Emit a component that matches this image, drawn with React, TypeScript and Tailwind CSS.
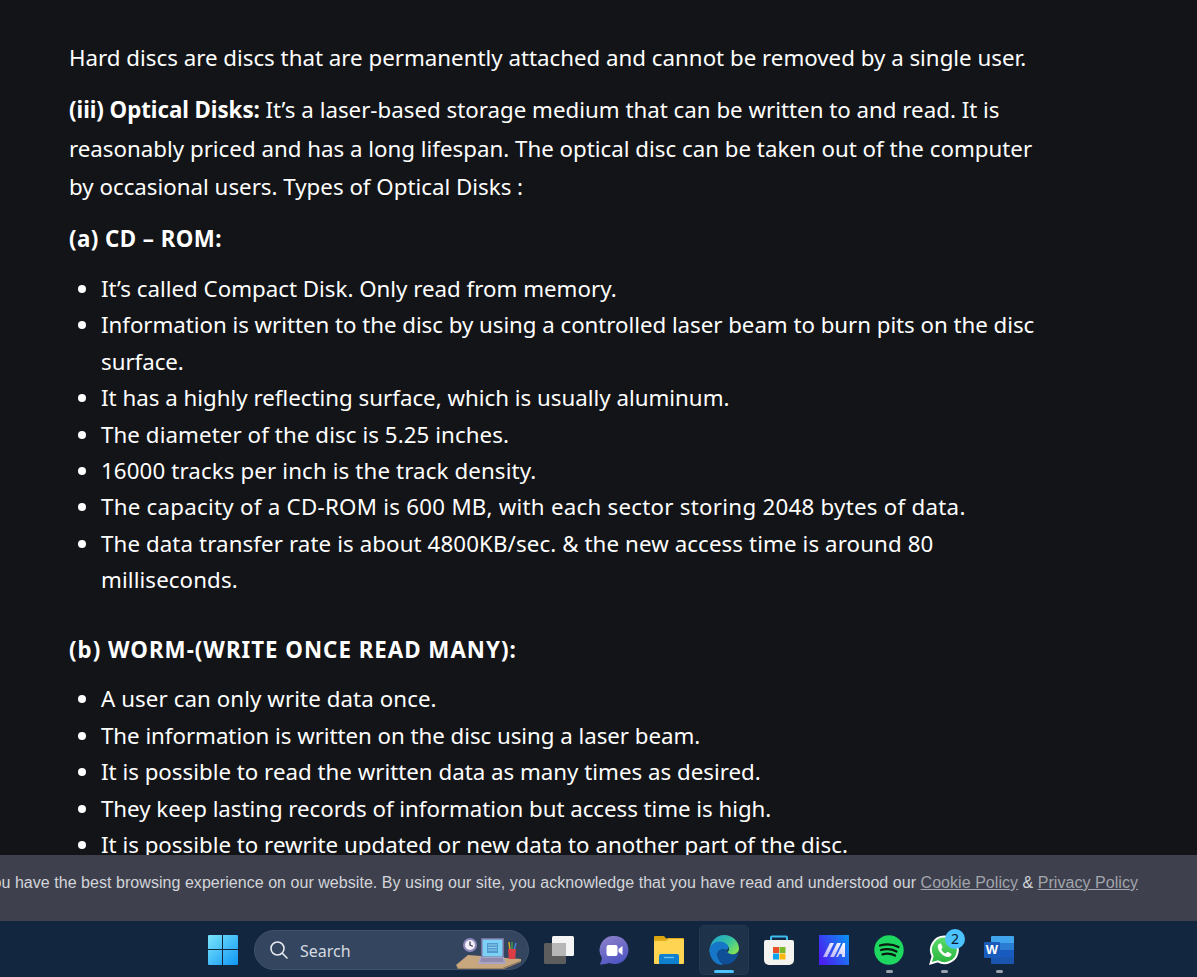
import type { ReactNode } from "react";

type Line = { text: string; cls?: string };

const cdRom: Line[] = [
  { text: "It’s called Compact Disk. Only read from memory." },
  { text: "Information is written to the disc by using a controlled laser beam to burn pits on the disc surface.", cls: "tracking-[-0.04px]" },
  { text: "It has a highly reflecting surface, which is usually aluminum." },
  { text: "The diameter of the disc is 5.25 inches.", cls: "tracking-[0.08px]" },
  { text: "16000 tracks per inch is the track density.", cls: "tracking-[0.12px]" },
  { text: "The capacity of a CD-ROM is 600 MB, with each sector storing 2048 bytes of data.", cls: "tracking-[0.26px]" },
  { text: "The data transfer rate is about 4800KB/sec. & the new access time is around 80 milliseconds.", cls: "tracking-[0.1px]" },
];

const worm: Line[] = [
  { text: "A user can only write data once.", cls: "tracking-[0.08px]" },
  { text: "The information is written on the disc using a laser beam.", cls: "tracking-[-0.04px]" },
  { text: "It is possible to read the written data as many times as desired." },
  { text: "They keep lasting records of information but access time is high.", cls: "tracking-[-0.04px]" },
  { text: "It is possible to rewrite updated or new data to another part of the disc." },
  { text: "Data that has already been written cannot be changed." },
];

const TextList = ({ items }: { items: Line[] }) => (
  <ul className="mt-[12.400px] list-disc pl-8 leading-[36.4px]">
    {items.map((item) => (
      <li key={item.text} className={item.cls}>{item.text}</li>
    ))}
  </ul>
);

const WindowsLogo = () => (
  <svg width="30" height="30" viewBox="0 0 30 30">
    <defs>
      <linearGradient id="win" x1="0" y1="0" x2="1" y2="1">
        <stop offset="0" stopColor="#7ae5fb" />
        <stop offset="1" stopColor="#0f96f5" />
      </linearGradient>
    </defs>
    <path fill="url(#win)" d="M0 1a1 1 0 0 1 1-1h13v14H0zM15 0h14a1 1 0 0 1 1 1v13H15zM0 15h14v15H1a1 1 0 0 1-1-1zM15 15h15v14a1 1 0 0 1-1 1H15z" />
  </svg>
);

// little desk picture at the right end of the search box
const DeskScene = () => (
  <svg width="72" height="40" viewBox="0 0 72 40" className="shrink-0">
    <path d="M0 35 12 25l53 4v2L47 38H2z" fill="#c8a77f" />
    <path d="M2 38h45l18-7v1L47 39.500H2L0 36z" fill="#9c8262" />
    <circle cx="14" cy="15" r="7" fill="#8d86b8" />
    <circle cx="14" cy="15" r="5" fill="#f1eff8" />
    <path d="M14 11.500v3.700l2.800 1" stroke="#2c2745" strokeWidth="1.200" fill="none" />
    <rect x="25" y="8" width="23" height="20" fill="#77719c" />
    <rect x="26.500" y="9.500" width="20" height="17" fill="#7fd0f5" />
    <rect x="31" y="13" width="11" height="10" fill="#4f9bd0" />
    <path d="M32 15h9M32 17.500h9M32 20h9" stroke="#a5d9f2" strokeWidth="0.800" />
    <path d="M24 27h24l2 7H22z" fill="#a9a3c4" />
    <path d="M25 29h22M24.500 31h23" stroke="#6d678f" strokeWidth="0.800" />
    <path d="M54 20l-1-8" stroke="#d9a928" strokeWidth="1.500" />
    <path d="M56 20v-8" stroke="#3f9a46" strokeWidth="1.500" />
    <path d="M58 20l2-7" stroke="#3f86d9" strokeWidth="1.500" />
    <path d="M52 19h8l-.8 10h-6.400z" fill="#dc3d45" />
  </svg>
);

const TaskView = () => (
  <svg width="30" height="28" viewBox="0 0 30 28">
    <rect x="0" y="7" width="22" height="21" rx="1.500" fill="#5d5d5d" />
    <rect x="8" y="0" width="22" height="20" rx="1.500" fill="#f4f4f4" />
    <rect x="8" y="7" width="14" height="13" fill="#b7b7b7" />
  </svg>
);

const ChatIcon = () => (
  <svg width="30" height="29" viewBox="0 0 30 29">
    <defs>
      <linearGradient id="chat" x1="0.2" y1="0" x2="0.6" y2="1">
        <stop offset="0" stopColor="#8b7fc9" />
        <stop offset="1" stopColor="#4f55c4" />
      </linearGradient>
    </defs>
    <path fill="url(#chat)" d="M15.500 0a14 14 0 1 1-5 27.100C8 28 4 28.700.5 28.500 2 26.500 2.800 24.500 2.800 21.500A14 14 0 0 1 15.500 0z" />
    <rect x="7.500" y="9" width="11" height="11" rx="2" fill="#fff" />
    <path d="M19.500 13l4-3v9l-4-3z" fill="#fff" />
  </svg>
);

const FolderIcon = () => (
  <svg width="30" height="28" viewBox="0 0 30 28">
    <path d="M1 0h9l3 3.500h-13V1a1 1 0 0 1 1-1z" fill="#dba50f" />
    <path d="M0 3h11l3-1 1 0h14a1 1 0 0 1 1 1v4H0z" fill="#e2ac1c" />
    <path d="M0 5h12l3-2h14a1 1 0 0 1 1 1v23a1 1 0 0 1-1 1H1a1 1 0 0 1-1-1z" fill="#ffd452" />
    <path d="M5 20a2 2 0 0 1 2-2h16a2 2 0 0 1 2 2v8H5z" fill="#0f7fd0" />
    <path d="M10 21.500h10" stroke="#6cc1f2" strokeWidth="1.300" />
  </svg>
);

const EdgeIcon = () => (
  <svg width="30" height="30" viewBox="0 0 30 30">
    <defs>
      <linearGradient id="edge1" x1="0" y1="0" x2="1" y2="0.700">
        <stop offset="0" stopColor="#1a9fd6" />
        <stop offset="0.600" stopColor="#36c3a0" />
        <stop offset="1" stopColor="#7fe05a" />
      </linearGradient>
    </defs>
    <path fill="url(#edge1)" d="M15 0c9 0 15 6.500 15 13.500 0 4-3.500 6-7 6-3 0-5-1-5.500-2 2-.8 3-2.500 2.500-4.500C19 9.500 14 7.500 9 9.500 5 11 2 14.500.5 17 .5 7 7 0 15 0z" />
    <path fill="#1677c8" d="M.5 15c0-4 4-8.500 10-8.500 5 0 9 3 9 6 0 1-1 2-2 2.500-3-1.500-8-1-9 3-1 4 2 9 6 11.500-8 1.500-14-6-14-14.500z" />
    <path fill="#0f4f97" d="M8.500 18c1-4 6-4.500 9-3 0 2 3 4.500 6 4.500 2 0 4.500-.5 6-2-1 6.500-6.500 12-13 12-4-.5-9-6-8-11.500z" />
  </svg>
);

const StoreIcon = () => (
  <svg width="30" height="30" viewBox="0 0 30 30">
    <path d="M7 6V2.500A1 1 0 0 1 8 1.500h14a1 1 0 0 1 1 1V6" fill="none" stroke="#3fbdf0" strokeWidth="2" />
    <path d="M0 7a2 2 0 0 1 2-2h26a2 2 0 0 1 2 2v18a5 5 0 0 1-5 5H5a5 5 0 0 1-5-5z" fill="#f5f3f0" />
    <rect x="9" y="12" width="6" height="6" fill="#e8502a" />
    <rect x="15.500" y="12" width="6" height="6" fill="#7cb82a" />
    <rect x="9" y="18.500" width="6" height="6" fill="#0aa4ec" />
    <rect x="15.500" y="18.500" width="6" height="6" fill="#fdb80f" />
  </svg>
);

const MaLogo = () => (
  <svg width="30" height="30" viewBox="0 0 30 30">
    <defs>
      <linearGradient id="ma" x1="0" y1="0.700" x2="1" y2="0.200">
        <stop offset="0" stopColor="#4b1ff0" />
        <stop offset="1" stopColor="#0d8cf5" />
      </linearGradient>
      <linearGradient id="mab" x1="0" y1="1" x2="1" y2="0">
        <stop offset="0" stopColor="#b4aaf8" />
        <stop offset="1" stopColor="#ffffff" />
      </linearGradient>
    </defs>
    <rect width="30" height="30" fill="url(#ma)" />
    <path fill="url(#mab)" fillRule="evenodd" d="M4 22 11 8h4L8 22zM11 22 18 8h4l-7 14zM17 22 24 8h2v14h-3l-.2-3h-2.300l-1.500 3z" />
  </svg>
);

const SpotifyIcon = () => (
  <svg width="30" height="30" viewBox="0 0 30 30">
    <circle cx="15" cy="15" r="14.700" fill="#1ed760" />
    <path d="M6 10.500c6-1.700 13-1.200 18.500 1.500M7 15c5-1.300 11-.9 15.500 1.500M8.500 19.300c4.300-1 9-.7 12.500 1.300" fill="none" stroke="#0b1a10" strokeWidth="2.300" strokeLinecap="round" />
  </svg>
);

const WhatsAppIcon = () => (
  <svg width="30" height="30" viewBox="0 0 30 30">
    <defs>
      <linearGradient id="wa" x1="0.500" y1="0" x2="0.500" y2="1">
        <stop offset="0" stopColor="#5fdc6b" />
        <stop offset="1" stopColor="#27b53e" />
      </linearGradient>
    </defs>
    <path fill="url(#wa)" stroke="#fff" strokeWidth="2" d="M15.500 1.500a13.300 13.300 0 1 1-6.500 24.900L1.500 28.500l2.100-7.300A13.300 13.300 0 0 1 15.500 1.500z" />
    <path fill="#fff" d="M11 8.500c-.6 0-2.200 1-2.200 3.300 0 4.700 5.600 10.200 10.300 10.200 2.200 0 3.300-1.500 3.400-2.400.1-.7-.1-1-.6-1.200l-2.800-1.400c-.5-.2-.9-.1-1.200.3l-1.100 1.300c-2.100-.8-3.700-2.400-4.500-4.400l1-1.200c.3-.4.300-.7.100-1.200l-1.100-2.600c-.2-.5-.5-.6-1.300-.6z" />
  </svg>
);

const WordIcon = () => (
  <div className="relative h-[28px] w-[30px]">
    <svg width="30" height="28" viewBox="0 0 30 28">
      <path d="M7 1a1 1 0 0 1 1-1h21a1 1 0 0 1 1 1v6H7z" fill="#41a5ee" />
      <rect x="7" y="7" width="23" height="7" fill="#2b7cd3" />
      <rect x="7" y="14" width="23" height="7" fill="#185abd" />
      <path d="M7 21h23v6a1 1 0 0 1-1 1H8a1 1 0 0 1-1-1z" fill="#1a55b0" />
    </svg>
    <span className="absolute left-0 top-[6px] flex h-[16px] w-[16px] items-center justify-center rounded-[1px] bg-[#1a5cbc] font-['Liberation_Sans',sans-serif] text-[13px] font-bold text-white">
      W
    </span>
  </div>
);

const TaskItem = ({ children, active, open, badge }: { children: ReactNode; active?: boolean; open?: boolean; badge?: string }) => (
  <div className="relative flex h-[50px] w-[55px] items-center justify-center">
    {active && <div className="absolute left-[2.500px] top-0 h-[50px] w-[50px] rounded-[5px] border border-[#26384f] bg-[#1e3249]" />}
    <div className="relative flex">{children}</div>
    {active && <div className="absolute bottom-[2px] left-[17.500px] h-[3px] w-[20px] rounded-full bg-[#4cc2ff]" />}
    {open && <div className="absolute bottom-[2px] left-[24px] h-[3px] w-[7px] rounded-full bg-[#9aa3ad]" />}
    {badge && (
      <span className="absolute left-[28.500px] top-[4px] flex h-[20px] w-[20px] items-center justify-center rounded-full bg-[#4cc2ff] font-['Noto_Sans',sans-serif] text-[14px] leading-none text-[#0b1a2a]">
        {badge}
      </span>
    )}
  </div>
);

export default function App() {
  return (
    <div className="flex h-[977px] w-[1197px] flex-col overflow-hidden bg-[#131417]">
      <main className="h-[855px] w-[1040px] shrink-0 overflow-hidden pl-[69px] pt-[39px] font-['Noto_Sans',sans-serif] text-[22.300px] leading-[38.500px] text-white">
        <p>Hard discs are discs that are permanently attached and cannot be removed by a single user.</p>
        <p className="mt-[13.500px]">
          <b className="font-bold tracking-[-0.050px]">(iii) Optical Disks:</b> It’s a laser-based storage medium that can be written to and read. It is reasonably priced and has a long lifespan. The optical disc can be taken out of the computer by occasional users. Types of Optical Disks :
        </p>
        <p className="mt-[13.500px] font-bold tracking-[0.450px]">(a) CD – ROM:</p>
        <TextList items={cdRom} />
        <p className="mt-[32px] font-bold tracking-[1px]">(b) WORM-(WRITE ONCE READ MANY):</p>
        <TextList items={worm} />
      </main>

      <div className="flex h-[66px] shrink-0 justify-end whitespace-nowrap bg-[#3e414d] pr-[59px] pt-[17px] font-['Liberation_Sans',sans-serif] text-[16px] leading-[22px] tracking-[0.045px] text-[#d3d5da]">
        <p>
          We use cookies to ensure you have the best browsing experience on our website. By using our site, you acknowledge that you have read and understood our{" "}
          <a className="text-[#a3a5ac] underline">Cookie Policy</a> &amp; <a className="text-[#a3a5ac] underline">Privacy Policy</a>
        </p>
      </div>

      <footer className="flex h-[56px] shrink-0 items-center bg-[#12263f] pl-[200px] pt-[2px]">
        <div className="flex w-[45px] justify-center">
          <WindowsLogo />
        </div>
        <div className="ml-[9px] mr-[2.500px] flex h-[40px] w-[275px] items-center overflow-hidden rounded-full border border-[#3f5269] bg-[#34465f] pl-[14px]">
          <svg width="20" height="20" viewBox="0 0 20 20" fill="none" stroke="#e6e9ee" strokeWidth="1.600" className="shrink-0">
            <circle cx="8.500" cy="8.500" r="6.500" />
            <path d="M13.300 13.300 18 18" strokeLinecap="round" />
          </svg>
          <span className="ml-[11px] flex-1 pt-[1px] font-['Noto_Sans',sans-serif] text-[16px] text-[#d5dae1]">Search</span>
          <DeskScene />
        </div>
        <TaskItem><TaskView /></TaskItem>
        <TaskItem><ChatIcon /></TaskItem>
        <TaskItem><FolderIcon /></TaskItem>
        <TaskItem active><EdgeIcon /></TaskItem>
        <TaskItem><StoreIcon /></TaskItem>
        <TaskItem><MaLogo /></TaskItem>
        <TaskItem open><SpotifyIcon /></TaskItem>
        <TaskItem open badge="2"><WhatsAppIcon /></TaskItem>
        <TaskItem open><WordIcon /></TaskItem>
      </footer>
    </div>
  );
}
